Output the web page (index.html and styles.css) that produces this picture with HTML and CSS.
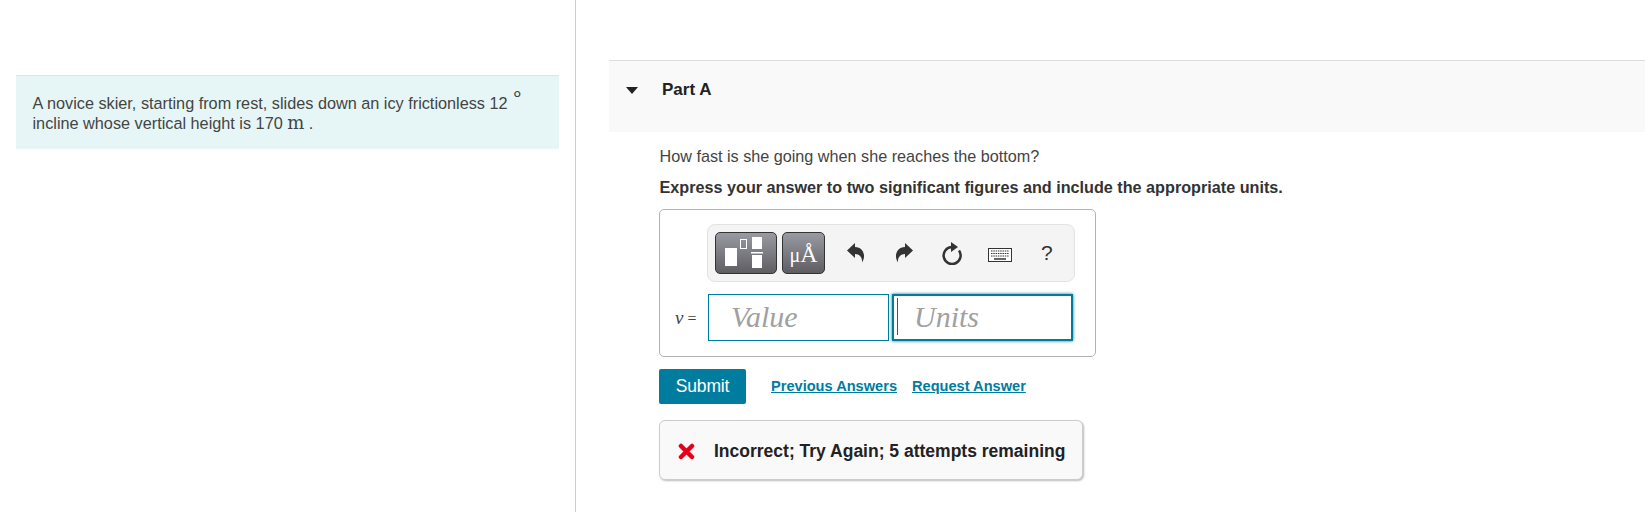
FILE: index.html
```html
<!DOCTYPE html>
<html lang="en">

<head>
    <meta charset="UTF-8" />
    <title>Part A</title>
    <link rel="stylesheet" href="styles.css">
</head>

<body>
    <div class="layout">
        <div class="intro">
            <div class="intro-box">
                A novice skier, starting from rest, slides down an icy frictionless 12 <sup class="deg">&#8728;</sup>
                incline whose vertical height is 170 <span class="unit">m</span> .
            </div>
        </div>

        <div class="main">
            <div class="part-head">
                <span class="caret"></span>
                <span class="part-title">Part A</span>
            </div>

            <div class="part-body">
                <p class="question">How fast is she going when she reaches the bottom?</p>
                <p class="instruct">Express your answer to two significant figures and include the appropriate units.</p>

                <div class="answer">
                    <div class="toolbar">
                        <button class="tool tool-wide" aria-label="Templates">
                            <svg width="60" height="40" viewBox="0 0 60 40">
                                <rect x="9" y="15" width="12" height="18" fill="#fff" />
                                <rect x="24.500" y="6.500" width="6" height="9" fill="none" stroke="#fff" />
                                <rect x="36" y="4" width="10" height="12" fill="#fff" />
                                <rect x="35" y="19" width="12" height="1.500" fill="#fff" />
                                <rect x="36" y="22" width="10" height="13" fill="#fff" />
                            </svg>
                        </button>
                        <button class="tool tool-units"><span class="mu">&#956;</span>&#197;</button>
                        <svg class="icon icon-undo" width="18" height="20" viewBox="0 0 18 20">
                            <path d="M0 7.500 8 0V4C14 4 17.500 9 17 14 16.800 16 16 18 15 19.500 15.500 15 13 11 8 11V15Z" fill="#333" />
                        </svg>
                        <svg class="icon icon-redo" width="18" height="20" viewBox="0 0 18 20">
                            <path d="M18 7.500 10 0V4C4 4 .5 9 1 14 1.200 16 2 18 3 19.500 2.500 15 5 11 10 11V15Z" fill="#333" />
                        </svg>
                        <svg class="icon icon-reset" width="21" height="23" viewBox="0 0 21 23">
                            <path d="M11 5A8.500 8.500 0 1 0 18 8.500" fill="none" stroke="#333" stroke-width="2.500" />
                            <path d="M10 0 17 5 10 10Z" fill="#333" />
                        </svg>
                        <svg class="icon icon-keys" width="24" height="14" viewBox="0 0 24 14">
                            <rect x=".5" y=".5" width="23" height="13" fill="#fff" stroke="#333" />
                            <path d="M3 3H21M3 5.500H21M3 8H21" stroke="#333" stroke-dasharray="1.500 .8" fill="none" />
                            <path d="M6 11H18" stroke="#333" stroke-width="1.500" />
                        </svg>
                        <span class="help">?</span>
                    </div>

                    <div class="answer-row">
                        <span class="var"><i class="var-name">v</i> =</span>
                        <div class="field">Value</div>
                        <div class="field field-focus"><span class="cursor"></span>Units</div>
                    </div>
                </div>

                <div class="submit-row">
                    <button class="submit">Submit</button>
                    <a href="#" class="link">Previous Answers</a>
                    <a href="#" class="link">Request Answer</a>
                </div>

                <div class="feedback">
                    <svg width="17" height="17" viewBox="0 0 17 17">
                        <path d="M3 3 14 14M14 3 3 14" stroke="#e2001a" stroke-width="4.500" stroke-linecap="round" />
                    </svg>
                    <span>Incorrect; Try Again; 5 attempts remaining</span>
                </div>
            </div>
        </div>
    </div>
</body>

</html>
```

FILE: styles.css
```css
* {
    box-sizing: border-box;
}

html,
body {
    height: 100%;
}

body {
    margin: 0;
    background-color: white;
    color: #444;
    font-family: 'Liberation Sans', Arial, sans-serif;
    font-size: 16.200px;
    overflow: hidden;
}

.layout {
    display: flex;
    height: 512px;
}

/* LEFT COLUMN */
.intro {
    width: 576px;
    flex-shrink: 0;
    padding: 75px 16px 0 15.500px;
    border-right: 1px solid #b5d3e7;
}

.intro-box {
    height: 74px;
    padding: 17px 16px 0 17px;
    background-color: #e6f6f6;
    border-top: 1px solid #d9e6e6;
    font-size: 16.260px;
    line-height: 20px;
}

.deg {
    position: relative;
    top: -2px;
    margin-left: -1px;
    font-size: 20px;
    line-height: 0;
}

.unit {
    font-family: 'DejaVu Serif', 'Liberation Serif', serif;
    font-size: 18px;
    line-height: 0;
}

/* RIGHT COLUMN */
.main {
    flex: 1;
    padding: 60px 0 0 33px;
}

.part-head {
    display: flex;
    height: 72px;
    padding: 19px 0 0 17px;
    background-color: #f9f9f9;
    border-top: 1px solid #ddd;
}

.caret {
    width: 0;
    height: 0;
    margin-top: 7px;
    border-left: 6.500px solid transparent;
    border-right: 6.500px solid transparent;
    border-top: 7px solid #222;
}

.part-title {
    margin-left: 24px;
    font-weight: bold;
    font-size: 17px;
    color: #222;
}

.part-body {
    padding: 14px 0 0 50px;
}

.question {
    margin: 0 0 0 .5px;
    line-height: 20px;
}

.instruct {
    margin: 11px 0 0 .5px;
    line-height: 20px;
    font-weight: bold;
    color: #333;
}

.answer {
    width: 437px;
    height: 148px;
    margin-top: 12px;
    padding: 14px 20px 0 47px;
    border: 1px solid #b3b3b3;
    border-radius: 5px;
}

.toolbar {
    display: flex;
    align-items: center;
    height: 58px;
    padding-left: 7px;
    background-color: #f4f4f4;
    border: 1px solid #e3e3e3;
    border-radius: 8px;
}

.tool {
    height: 42px;
    padding: 0;
    color: white;
    background: linear-gradient(#9a9aa2, #5e5e62);
    border: 1px solid #333;
    border-radius: 5px;
    font-family: 'Liberation Serif', serif;
    font-size: 24px;
}

.tool-wide {
    width: 62px;
}

.tool-wide svg {
    display: block;
}

.tool-units {
    width: 43px;
    margin-left: 5px;
    padding-top: 3px;
    line-height: 28px;
}

.mu {
    font-size: 20px;
}

.icon {
    flex-shrink: 0;
}

.icon-undo {
    margin-left: 22px;
}

.icon-redo {
    margin-left: 30px;
}

.icon-reset {
    margin-left: 28px;
}

.icon-keys {
    margin: 4px 0 0 26px;
}

.help {
    margin-left: 29px;
    font-size: 21px;
    color: #333;
}

.answer-row {
    display: flex;
    align-items: center;
    gap: 3px;
    margin: 12px 0 0 -35px;
}

.var {
    width: 33px;
    padding: 1px 0 0 3px;
    font-family: 'Liberation Serif', serif;
    font-size: 16px;
    white-space: nowrap;
}

.var-name {
    font-size: 19px;
}

.field {
    position: relative;
    width: 181px;
    height: 47px;
    padding: 0 0 0 22px;
    border: 1px solid #007c9e;
    color: #a0a0a0;
    font-family: 'Liberation Serif', serif;
    font-style: italic;
    font-size: 30px;
    line-height: 43px;
}

.field-focus {
    padding-left: 20px;
    border-width: 2px;
    line-height: 41px;
    box-shadow: 0 0 3px #007c9e;
}

.cursor {
    position: absolute;
    left: 3px;
    top: 2px;
    width: 1px;
    height: 37px;
    background-color: #2b50c8;
}

.submit-row {
    display: flex;
    align-items: center;
    margin-top: 12px;
}

.submit {
    width: 87px;
    height: 35px;
    margin-right: 25px;
    padding: 0;
    background-color: #007c9e;
    color: white;
    border: none;
    border-radius: 2px;
    font-family: 'Liberation Sans', Arial, sans-serif;
    font-size: 17.500px;
    letter-spacing: -0.2px;
}

.link {
    margin: 0 15px 2px 0;
    color: #007c9e;
    font-size: 14.600px;
    font-weight: bold;
}

.feedback {
    display: flex;
    align-items: center;
    gap: 19px;
    width: 424px;
    height: 60px;
    margin-top: 16px;
    padding: 2px 0 0 18px;
    background-color: #f9f9f9;
    border: 1px solid #ccc;
    border-radius: 6px;
    box-shadow: 1px 1px 2px #bbb;
    color: #222;
    font-weight: bold;
    font-size: 17.500px;
}
```
